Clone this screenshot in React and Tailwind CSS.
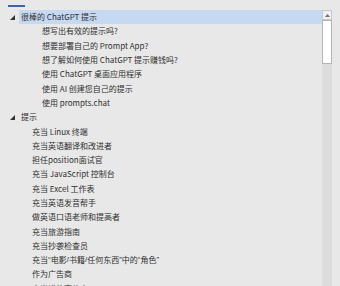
import React from "react";

const Tri = () => (
  <svg width="5" height="5" viewBox="0 0 5 5" className="block">
    <polygon points="5,0 5,5 0,5" fill="#333333" />
  </svg>
);

const Q = ({ children }) => (
  <span style={{ fontFamily: '"Liberation Sans", sans-serif' }}>{children}</span>
);

const group1 = [
  "想写出有效的提示吗?",
  "想要部署自己的 Prompt App?",
  "想了解如何使用 ChatGPT 提示赚钱吗?",
  "使用 ChatGPT 桌面应用程序",
  "使用 AI 创建您自己的提示",
  "使用 prompts.chat",
];

const group2 = [
  "充当 Linux 终端",
  "充当英语翻译和改进者",
  "担任position面试官",
  "充当 JavaScript 控制台",
  "充当 Excel 工作表",
  "充当英语发音帮手",
  "做英语口语老师和提高者",
  "充当旅游指南",
  "充当抄袭检查员",
  <>
    充当<Q>“</Q>电影<Q>/</Q>书籍<Q>/</Q>任何东西<Q>”</Q>中的<Q>“</Q>角色<Q>”</Q>
  </>,
  "作为广告商",
  "充当讲故事的人",
];

function Row({ children, indent, tri, selected }) {
  return (
    <div className="flex h-[14.3px] items-center">
      <div className="flex w-[19px] shrink-0 items-center pl-[10px]">{tri && <Tri />}</div>
      <div
        className={
          "flex h-full flex-1 items-center whitespace-nowrap " +
          (selected ? "bg-[#c5d9f3]" : "")
        }
        style={{ paddingLeft: indent }}
      >
        {children}
      </div>
    </div>
  );
}

export default function App() {
  return (
    <div
      className="relative h-[286px] w-[340px] overflow-hidden bg-[#e8e8e8] text-[8px] text-[#2f2f2f]"
      style={{ fontFamily: '"Noto Sans CJK SC", "Noto Sans", sans-serif' }}
    >
      <div className="pt-[5px]">
        <div className="ml-[8px] h-[2px] w-[17px] bg-[#3d63a8]" />
      </div>
      <div className="mt-[3px] flex">
        <div className="w-[322px] shrink-0">
          <Row tri selected indent="2px">很棒的 ChatGPT 提示</Row>
          {group1.map((t) => (
            <Row key={t} indent="23px">{t}</Row>
          ))}
          <Row tri indent="2px">提示</Row>
          {group2.map((t, i) => (
            <Row key={i} indent="13px">{t}</Row>
          ))}
        </div>
        <div className="flex h-[276px] w-[10px] shrink-0 flex-col bg-[#dcdcdc]">
          <div className="flex h-[10px] items-center justify-center border border-[#c8c8c8] bg-[#f0f0f0]">
            <svg width="5" height="3" viewBox="0 0 5 3" className="block">
              <polygon points="2.5,0 5,3 0,3" fill="#707070" />
            </svg>
          </div>
          <div className="h-[44px] border border-[#b4b4b4] bg-white" />
        </div>
      </div>
    </div>
  );
}
